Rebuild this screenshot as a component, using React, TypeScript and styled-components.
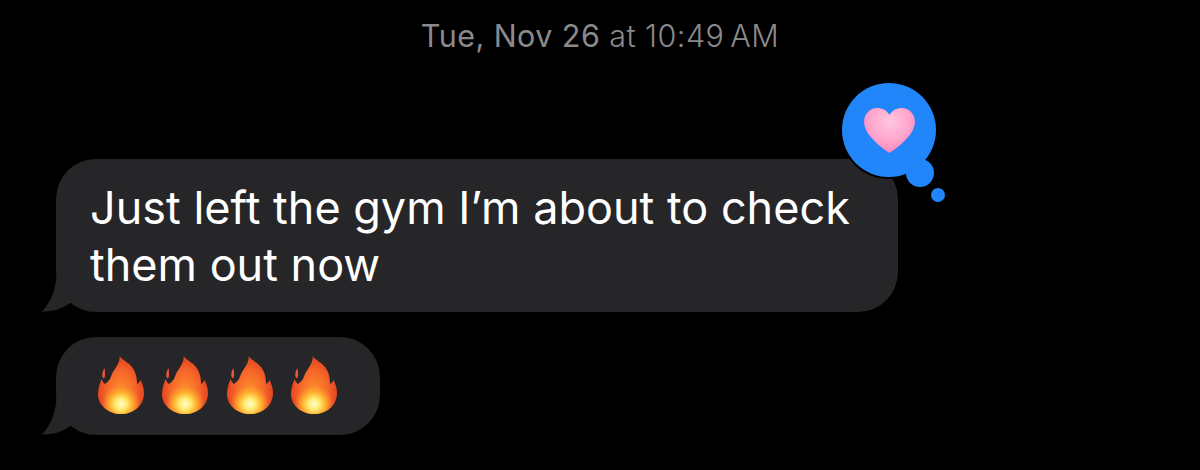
import styled, { createGlobalStyle } from "styled-components";

const GlobalStyle = createGlobalStyle`
  html, body {
    margin: 0;
    padding: 0;
    background: #000;
  }
`;

const FLAME_PATH =
  "M21.7 0 C24 4 30 6 33 10 C37 14 39 20 39 28 C40.5 27 41.8 26 42.5 24 C44.5 28 46 32 46 37 C46 50 35 58 23 58 C11 58 0 50 0 38 C0 33 1.5 28 3.5 23 C4.5 25 5.5 27 7 28 C9 26 11 25 12 23 C13 20 14 18 15 16 C18 11 22 7 21.7 0 Z";

const BubbleTail = () => (
  <Tail viewBox="0 0 48 44" aria-hidden="true">
    <path d="M15 0 C15 16 11 32 0 43.5 C12 44 22 40 31 33 C36 38 42 42 48 44 L48 0 Z" />
  </Tail>
);

const Flame = ({ id }: { id: string }) => (
  <FlameIcon viewBox="0 0 46 58" aria-hidden="true">
    <defs>
      <radialGradient
        id={`${id}-base`}
        cx="0"
        cy="0"
        r="1"
        gradientUnits="userSpaceOnUse"
        gradientTransform="translate(23 38) scale(25 40)"
      >
        <stop offset="0" stopColor="#fd952c" />
        <stop offset="0.55" stopColor="#f7692a" />
        <stop offset="1" stopColor="#e13c20" />
      </radialGradient>
      <radialGradient id={`${id}-glow`} cx="23" cy="48" r="19" gradientUnits="userSpaceOnUse">
        <stop offset="0" stopColor="#fffbd2" />
        <stop offset="0.3" stopColor="#ffeb70" />
        <stop offset="0.62" stopColor="#ffad2e" />
        <stop offset="1" stopColor="#fd952c" stopOpacity="0" />
      </radialGradient>
    </defs>
    <path fill={`url(#${id}-base)`} d={FLAME_PATH} />
    <path fill={`url(#${id}-glow)`} d={FLAME_PATH} />
    <path fill="#e9573a" d="M6.5 12 C7 15 7.5 19 6.5 22 C5.5 23 4.5 21.5 4.2 20 C4.2 17 5 14 6.5 12 Z" />
  </FlameIcon>
);

const HeartIcon = () => (
  <HeartSvg viewBox="0 0 52 46" aria-hidden="true">
    <defs>
      <radialGradient id="heart" cx="26" cy="14" r="34" gradientUnits="userSpaceOnUse">
        <stop offset="0" stopColor="#ffc6de" />
        <stop offset="0.55" stopColor="#ffa8cf" />
        <stop offset="1" stopColor="#f97fb9" />
      </radialGradient>
    </defs>
    <path
      fill="url(#heart)"
      d="M26 7 C29 2 34 0 38.5 0 C46 0 52 6 52 14 C52 26 38 38 26 46 C14 38 0 26 0 14 C0 6 6 0 13.5 0 C18 0 23 2 26 7 Z"
    />
  </HeartSvg>
);

const App = () => {
  return (
    <Page>
      <GlobalStyle />
      <Timestamp>
        <strong>Tue, Nov 26</strong> at 10:49{"\u202f"}AM
      </Timestamp>
      <Thread>
        <TextBubble>
          Just left the gym I’m about to check
          <br />
          them out now
          <BubbleTail />
          <Reaction>
            <ReactionBlob />
            <ReactionFace>
              <HeartIcon />
            </ReactionFace>
            <ReactionDot />
          </Reaction>
        </TextBubble>
        <EmojiBubble>
          {["f1", "f2", "f3", "f4"].map((id) => (
            <Flame key={id} id={id} />
          ))}
          <BubbleTail />
        </EmojiBubble>
      </Thread>
    </Page>
  );
};

export default App;

const Page = styled.div`
  width: 1200px;
  height: 470px;
  overflow: hidden;
  background: #000;
  font-family: Inter, "Liberation Sans", sans-serif;
`;

const Timestamp = styled.div`
  padding-top: 20px;
  height: 32px;
  line-height: 32px;
  text-align: center;
  font-size: 30.5px;
  font-weight: 300;
  letter-spacing: 0.45px;
  color: #8a8a8c;

  strong {
    font-weight: 400;
  }
`;

const Thread = styled.div`
  display: flex;
  flex-direction: column;
  align-items: flex-start;
  gap: 25px;
  padding: 107px 0 0 56px;
`;

const Bubble = styled.div`
  position: relative;
  box-sizing: border-box;
  background: #262628;
  border-radius: 40px;
  color: #fff;
`;

const TextBubble = styled(Bubble)`
  width: 842px;
  height: 153px;
  padding: 20px 0 0 34px;
  font-size: 45px;
  line-height: 57px;
`;

const EmojiBubble = styled(Bubble)`
  display: flex;
  align-items: center;
  gap: 18.3px;
  width: 324px;
  height: 98px;
  padding: 0 0 2px 42px;
`;

const Tail = styled.svg`
  position: absolute;
  left: -14px;
  bottom: 0;
  width: 48px;
  height: 44px;
  fill: #262628;
`;

const FlameIcon = styled.svg`
  flex: none;
  width: 46px;
  height: 58px;
  filter: blur(0.7px);
`;

const Reaction = styled.div`
  position: absolute;
  top: -76px;
  left: 786px;
  width: 94px;
  height: 94px;
  border-radius: 50%;
  box-shadow: 0 0 0 2px #000;
`;

const ReactionFace = styled.div`
  position: relative;
  display: flex;
  align-items: center;
  justify-content: center;
  width: 100%;
  height: 100%;
  border-radius: 50%;
  background: #2186f9;
`;

const HeartSvg = styled.svg`
  width: 51px;
  height: 45px;
  filter: blur(0.5px);
`;

const ReactionBlob = styled.span`
  position: absolute;
  left: 64px;
  top: 76px;
  width: 28px;
  height: 28px;
  border-radius: 50%;
  background: #2186f9;
  box-shadow: 0 0 0 2px #000;
`;

const ReactionDot = styled.span`
  position: absolute;
  left: 89px;
  top: 105px;
  width: 14px;
  height: 14px;
  border-radius: 50%;
  background: #2186f9;
`;
